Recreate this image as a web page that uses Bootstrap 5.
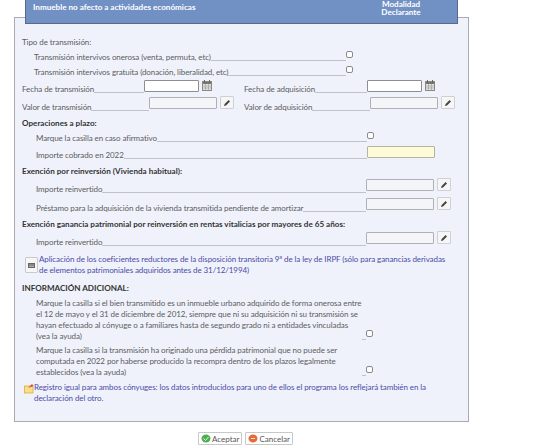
<!DOCTYPE html>
<html lang="es"><head><meta charset="utf-8"><title>Inmueble</title>
<link href="https://cdn.jsdelivr.net/npm/bootstrap@5.3.0/dist/css/bootstrap.min.css" rel="stylesheet">
<style>
html,body{height:445px;overflow:hidden;background:#fff}
body{font-family:"Lato","Liberation Sans",sans-serif;font-size:8px;letter-spacing:-.09px;line-height:11px;color:#5c5c5c}
.cabecera{position:relative;z-index:2;margin-left:25px;width:433px;height:24px;background:#7191c5;border-bottom:1px solid #56698f;border-left:1px solid #56698f;border-right:1px solid #56698f;color:#fff;font-weight:700;font-size:8.1px;letter-spacing:0;line-height:8px;padding:3px 36px 0 7px}
.cab-mod{text-align:center;width:40px;margin-top:-3px}
.panel-form{margin:-7px 0 0 14px;width:455px;height:405px;background:#eff2fb;border:1px solid #a9abb0;padding:15px 13px 0 7px}
.fila{display:flex;align-items:flex-end}
.h15{height:15px}.h16{height:16px}.h17{height:17px}.h18{height:18px}.h19{height:19px}
.sang{padding-left:14px}.sang2{padding-left:12px}
.raya{flex:1 1 0;min-width:0;border-bottom:1px solid #c0c2c7;margin-bottom:2px;align-self:flex-end}
.negrita{font-weight:700;font-size:8.1px;letter-spacing:0;color:#333}
input.casilla{width:7px;height:7px;min-height:0;margin:0 0 5px 0;border:1px solid #8a8a8a;border-radius:1.5px;background-color:#fff;float:none;flex:none}
input.campo{flex:none;width:68px;height:12px;min-height:0;padding:0 2px;font-size:8px;border:1px solid #aeb0b6;border-radius:1px;background:#f4f5f8;margin-bottom:3px}
input.campo.blanco{background:#fff;width:55px;border-color:#8e8e8e}
input.campo.amarillo{background:#fdfbd9;border-color:#b5b59c}
.lapiz{flex:none;width:14px;height:13px;padding:0;margin:0 0 3px 3px;border:1px solid #cfd0d4;border-radius:1px;background:#f6f6f6;display:flex;align-items:center;justify-content:center}
.calend{flex:none;width:10px;height:11px;margin:0 0 4px 3px}
.mitad1{width:190px}.mitad2{margin-left:32px;flex:1 1 0;min-width:0}
.enlace{color:#4c4ca6}
.boton-ap{flex:none;width:13px;height:16px;padding:0;border:1px solid #c9cad0;border-radius:1px;background:#f6f6f6;display:flex;align-items:center;justify-content:center;margin:3px 1px 0 3px}
.bloque{display:flex;margin-top:6px}
.parr{margin:0;width:326px;line-height:11px}
.pie{gap:3px;margin-top:10px;padding-left:198px}
.pie .btn{font-size:8px;line-height:10px;height:13px;padding:0 2px;border:1px solid #c8c8c8;border-radius:1px;background:#fff;color:#555;display:flex;align-items:center;gap:1px}
</style></head><body>
<div class="cabecera d-flex justify-content-between">
  <span>Inmueble no afecto a actividades económicas</span>
  <span class="cab-mod">Modalidad<br>Declarante</span>
</div>
<form class="panel-form">
  <div class="fila h15">Tipo de transmisión:</div>
  <div class="fila h15 sang2" style="padding-right:102px"><span>Transmisión intervivos onerosa (venta, permuta, etc)</span><span class="raya"></span><input class="form-check-input casilla" type="checkbox"></div>
  <div class="fila h15 sang2" style="padding-right:102px"><span>Transmisión intervivos gratuita (donación, liberalidad, etc)</span><span class="raya"></span><input class="form-check-input casilla" type="checkbox"></div>
  <div class="fila h17">
    <div class="fila mitad1"><span>Fecha de transmisión</span><span class="raya"></span><input class="form-control campo blanco"><svg class="calend" viewBox="0 0 10 11"><rect x=".5" y="1.500" width="9" height="9" fill="#e4e4de" stroke="#8a8a84"/><rect x="1" y="2" width="8" height="2" fill="#77776f"/><path d="M2.500 0v3M7.500 0v3" stroke="#666"/><path d="M1 6h8M1 8h8M3.500 4v6M6.500 4v6" stroke="#999" stroke-width=".6"/></svg></div>
    <div class="fila mitad2" style="padding-right:20px"><span>Fecha de adquisición</span><span class="raya"></span><input class="form-control campo blanco"><svg class="calend" viewBox="0 0 10 11"><rect x=".5" y="1.500" width="9" height="9" fill="#e4e4de" stroke="#8a8a84"/><rect x="1" y="2" width="8" height="2" fill="#77776f"/><path d="M2.500 0v3M7.500 0v3" stroke="#666"/><path d="M1 6h8M1 8h8M3.500 4v6M6.500 4v6" stroke="#999" stroke-width=".6"/></svg></div>
  </div>
  <div class="fila h18">
    <div class="fila mitad1" style="width:212px"><span>Valor de transmisión</span><span class="raya"></span><input class="form-control campo" style="margin-bottom:4px"><button type="button" class="btn lapiz" style="margin-bottom:4px"><svg width="8" height="8" viewBox="0 0 8 8"><path d="M1 7l.6-2L5.600 1l1.400 1.400-4 4z" fill="#444"/></svg></button></div>
    <div class="fila mitad2" style="margin-left:10px"><span>Valor de adquisición</span><span class="raya"></span><input class="form-control campo" style="margin-bottom:4px"><button type="button" class="btn lapiz" style="margin-bottom:4px"><svg width="8" height="8" viewBox="0 0 8 8"><path d="M1 7l.6-2L5.600 1l1.400 1.400-4 4z" fill="#444"/></svg></button></div>
  </div>
  <div class="fila h16 negrita">Operaciones a plazo:</div>
  <div class="fila h15 sang" style="padding-right:81px"><span>Marque la casilla en caso afirmativo</span><span class="raya"></span><input class="form-check-input casilla" type="checkbox"></div>
  <div class="fila h17 sang" style="padding-right:20px"><span>Importe cobrado en 2022</span><span class="raya"></span><input class="form-control campo amarillo"></div>
  <div class="fila h16 negrita">Exención por reinversión (Vivienda habitual):</div>
  <div class="fila h18 sang" style="padding-right:4px"><span>Importe reinvertido</span><span class="raya"></span><input class="form-control campo" style="margin-bottom:4px"><button type="button" class="btn lapiz" style="margin-bottom:4px"><svg width="8" height="8" viewBox="0 0 8 8"><path d="M1 7l.6-2L5.600 1l1.400 1.400-4 4z" fill="#444"/></svg></button></div>
  <div class="fila h19 sang" style="padding-right:4px"><span>Préstamo para la adquisición de la vivienda transmitida pendiente de amortizar</span><span class="raya"></span><input class="form-control campo" style="margin-bottom:4px"><button type="button" class="btn lapiz" style="margin-bottom:4px"><svg width="8" height="8" viewBox="0 0 8 8"><path d="M1 7l.6-2L5.600 1l1.400 1.400-4 4z" fill="#444"/></svg></button></div>
  <div class="fila h16 negrita">Exención ganancia patrimonial por reinversión en rentas vitalicias por mayores de 65 años:</div>
  <div class="fila h18 sang" style="padding-right:4px"><span>Importe reinvertido</span><span class="raya"></span><input class="form-control campo" style="margin-bottom:4px"><button type="button" class="btn lapiz" style="margin-bottom:4px"><svg width="8" height="8" viewBox="0 0 8 8"><path d="M1 7l.6-2L5.600 1l1.400 1.400-4 4z" fill="#444"/></svg></button></div>
  <div class="bloque enlace"><button type="button" class="btn boton-ap"><svg width="7" height="5" viewBox="0 0 7 5"><rect width="7" height="5" fill="#666"/><path d="M1 2h5M1 3.500h5" stroke="#ddd" stroke-width=".6"/></svg></button><span>Aplicación de los coeficientes reductores de la disposición transitoria 9ª de la ley de IRPF (sólo para ganancias derivadas de elementos patrimoniales adquiridos antes de 31/12/1994)</span></div>
  <div class="fila h18 negrita">INFORMACIÓN ADICIONAL:</div>
  <div class="fila sang" style="margin-top:4px"><p class="parr">Marque la casilla si el bien transmitido es un inmueble urbano adquirido de forma onerosa entre el 12 de mayo y el 31 de diciembre de 2012, siempre que ni su adquisición ni su transmisión se hayan efectuado al cónyuge o a familiares hasta de segundo grado ni a entidades vinculadas (vea la ayuda)</p><span class="raya" style="flex:none;width:4px"></span><input class="form-check-input casilla" type="checkbox"></div>
  <div class="fila sang" style="margin-top:3px"><p class="parr">Marque la casilla si la transmisión ha originado una pérdida patrimonial que no puede ser computada en 2022 por haberse producido la recompra dentro de los plazos legalmente establecidos (vea la ayuda)</p><span class="raya" style="flex:none;width:4px"></span><input class="form-check-input casilla" type="checkbox"></div>
  <div class="d-flex enlace" style="margin-top:4px"><svg class="flex-shrink-0" style="margin:1px 0 0 2px" width="10" height="11" viewBox="0 0 10 11"><rect x=".5" y="3" width="8.500" height="7" fill="#f8e08a" stroke="#d8b040" stroke-width=".8"/><path d="M4 5l4-4 1.500 2z" fill="#d84a30"/></svg><span>Registro igual para ambos cónyuges: los datos introducidos para uno de ellos el programa los reflejará también en la declaración del otro.</span></div>
</form>
<div class="d-flex pie">
  <button type="button" class="btn"><svg width="10" height="9" viewBox="0 0 10 9"><ellipse cx="5" cy="4.500" rx="4.500" ry="4" fill="#4caf50"/><path d="M2.500 4.500l2 2 3-3.500" stroke="#dff5df" fill="none"/></svg>Aceptar</button>
  <button type="button" class="btn"><svg width="10" height="9" viewBox="0 0 10 9"><ellipse cx="5" cy="4.500" rx="4.500" ry="4" fill="#e8683a"/><path d="M3 4.500h4" stroke="#fde0d0"/></svg>Cancelar</button>
</div>
<script src="https://cdn.jsdelivr.net/npm/bootstrap@5.3.0/dist/js/bootstrap.bundle.min.js"></script>
</body></html>
